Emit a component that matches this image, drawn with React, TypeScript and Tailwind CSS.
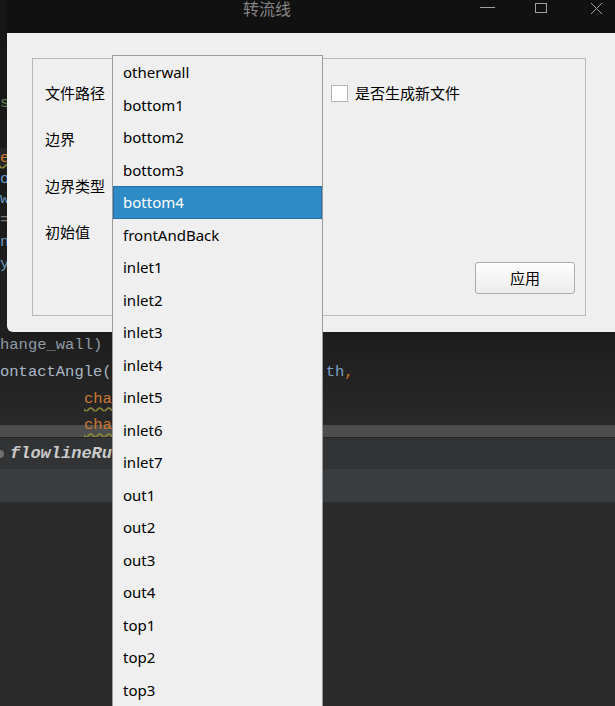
const boundaries = [
  "otherwall",
  "bottom1",
  "bottom2",
  "bottom3",
  "bottom4",
  "frontAndBack",
  "inlet1",
  "inlet2",
  "inlet3",
  "inlet4",
  "inlet5",
  "inlet6",
  "inlet7",
  "out1",
  "out2",
  "out3",
  "out4",
  "top1",
  "top2",
  "top3",
];

const selected = "bottom4";

function EditorBackground() {
  return (
    <div className="flex flex-col w-full h-full font-['Liberation_Mono','DejaVu_Sans_Mono',monospace] text-[15.5px] whitespace-pre">
      {/* code behind the dialog, only a sliver shows on the left */}
      <div className="flex flex-col h-[332px] bg-[linear-gradient(to_bottom,#161616,#1f1f1f)]">
        <div className="h-[93px]" />
        <div className="h-[20px] leading-[20px] text-[#6a8759]">s</div>
        <div className="h-[35px]" />
        <div className="h-[21px] leading-[21px] bg-[#262626] text-[#cc7832] underline decoration-wavy decoration-[#8a8a3a]">e</div>
        <div className="h-[20px] leading-[20px] text-[#6897bb]">o</div>
        <div className="h-[20px] leading-[20px] text-[#6897bb]">w</div>
        <div className="h-[22px] leading-[22px] text-[#777]">=</div>
        <div className="h-[23px] leading-[23px] text-[#6897bb]">n</div>
        <div className="h-[21px] leading-[21px] text-[#6897bb]">y</div>
      </div>

      <div className="flex flex-col bg-[linear-gradient(to_bottom,#1d1d1d,#2a2a2a)]">
        <div className="h-[27px] leading-[27px] text-[#8f9aa5]">hange_wall)</div>
        <div className="flex h-[27px] leading-[27px] text-[#a9b7c6]">
          <span>ontactAngle(</span>
          <span className="w-[214px]" />
          <span className="text-[#7d9fc4]">th</span>
          <span className="text-[#cc7832]">,</span>
        </div>
        <div className="h-[27px] leading-[27px] pl-[84px]">
          <span className="text-[#cc7832] underline decoration-wavy decoration-[#8a8a3a] underline-offset-[3px]">cha</span>
        </div>
        <div className="h-[24px] leading-[24px] pl-[84px] bg-[linear-gradient(to_bottom,transparent_12px,#4d4d4d_12px)]">
          <span className="text-[#cc7832] underline decoration-wavy decoration-[#8a8a3a] underline-offset-[3px]">cha</span>
        </div>
      </div>

      <div className="flex items-center h-[32px] bg-[#313335] border-t border-[#262626]">
        <span className="w-[8px] h-[8px] -ml-[4px] rounded-full bg-[#6e6e6e]" />
        <span className="ml-[6px] font-bold italic text-[17px] text-[#c9c9c9]">flowlineRu</span>
      </div>
      <div className="h-[33px] bg-[#3a3d40]" />
      <div className="flex-1 bg-[#2b2b2b]" />
    </div>
  );
}

function TitleBar() {
  return (
    <div className="flex h-[33px] bg-[#111111] shrink-0">
      <div className="flex-1 pl-[236px]">
        <span className="block text-[16px] leading-[18px] text-[#858585]">转流线</span>
      </div>
      <div className="flex items-start w-[135px]">
        <svg width="15" height="14" viewBox="0 0 15 14">
          <line x1="0" y1="7.5" x2="15" y2="7.5" stroke="#a0a0a0" strokeWidth="1" />
        </svg>
        <svg width="12" height="14" viewBox="0 0 12 14" className="ml-[40px]">
          <rect x="0.5" y="3.5" width="11" height="9" fill="none" stroke="#a0a0a0" strokeWidth="1" />
        </svg>
        <svg width="13" height="15" viewBox="0 0 13 15" className="ml-[43px]">
          <path d="M1 3 L12 14 M12 3 L1 14" stroke="#a0a0a0" strokeWidth="1" />
        </svg>
      </div>
    </div>
  );
}

function Field({ label, children }: { label: string; children?: React.ReactNode }) {
  return (
    <div className="flex items-center h-[46.33px]">
      <span className="w-[286px]">{label}</span>
      {children}
    </div>
  );
}

function Dialog() {
  return (
    <div className="absolute left-[7px] top-0 w-[608px] h-[332px] flex flex-col rounded-bl-[6px] overflow-hidden">
      <TitleBar />
      <div className="flex-1 bg-[#efefef] pl-[25px] pt-[25px]">
        <div className="flex flex-col w-[554px] h-[258px] border border-[#b9b9b9] pl-[12px] pt-[11px] text-[15px] text-black">
          <Field label="文件路径">
            <span className="w-[17px] h-[17px] bg-white border border-[#b4b4b4]" />
            <span className="ml-[7px]">是否生成新文件</span>
          </Field>
          <Field label="边界" />
          <Field label="边界类型" />
          <Field label="初始值" />
          <div className="flex justify-end mt-[7px] mr-[10px]">
            <button className="w-[100px] h-[32px] rounded-[3px] border border-[#adadad] bg-[linear-gradient(to_bottom,#fdfdfd,#ececec)] text-[15px]">
              应用
            </button>
          </div>
        </div>
      </div>
    </div>
  );
}

function BoundaryPopup() {
  return (
    <div className="absolute left-[112px] top-[55px] w-[211px] h-[680px] border border-[#9b9b9b] bg-[#efefef] flex flex-col text-[15px]">
      {boundaries.map((name) =>
        name === selected ? (
          <div
            key={name}
            className="flex items-center shrink-0 h-[32.5px] pl-[9px] bg-[#2e8bc6] border border-[#2870a8] text-white"
          >
            {name}
          </div>
        ) : (
          <div key={name} className="flex items-center shrink-0 h-[32.5px] pl-[10px] text-black">
            {name}
          </div>
        )
      )}
    </div>
  );
}

export default function App() {
  return (
    <div className="relative w-[615px] h-[706px] overflow-hidden bg-[#2b2b2b] font-['Noto_Sans','Noto_Sans_CJK_SC',sans-serif]">
      <EditorBackground />
      <Dialog />
      <BoundaryPopup />
    </div>
  );
}
